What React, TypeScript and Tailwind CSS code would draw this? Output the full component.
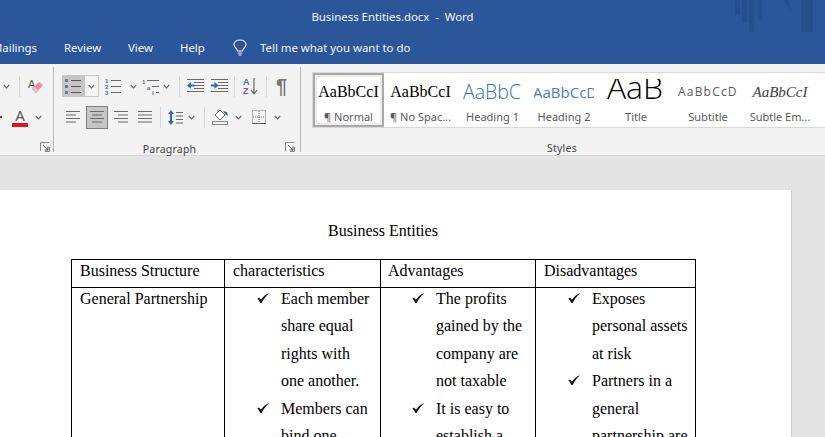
import type { ReactNode } from 'react'

const ui = 'font-["Noto_Sans","Open_Sans",sans-serif]'

function Chevron({ className = '' }: { className?: string }) {
  return (
    <svg width="7" height="5" viewBox="0 0 7 5" className={className}>
      <path d="M0.8 1 L3.5 3.8 L6.2 1" fill="none" stroke="#666" strokeWidth="1.2" />
    </svg>
  )
}

function Divider({ className = '' }: { className?: string }) {
  return <div className={`w-px h-[21px] bg-[#d4d4d4] ${className}`} />
}

function Launcher() {
  return (
    <svg width="10" height="10" viewBox="0 0 10 10">
      <path d="M0.5 9 V0.5 H9" fill="none" stroke="#8a8a8a" />
      <path d="M3 3 L8 8 M8 4.5 V8 H4.5" fill="none" stroke="#555" />
      <path d="M9.5 5 V9.5 H5" fill="none" stroke="#8a8a8a" />
    </svg>
  )
}

function Lines({ widths, x = 0, w = 16, gap = 3, color = '#6a6a6a' }: { widths: number[]; x?: number; w?: number; gap?: number; color?: string }) {
  const h = (widths.length - 1) * gap + 2
  return (
    <svg width={w} height={h} viewBox={`0 0 ${w} ${h}`}>
      {widths.map((lw, i) => (
        <rect key={i} x={x === -1 ? w - lw : x === -2 ? (w - lw) / 2 : x} y={i * gap} width={lw} height="1" fill={color} />
      ))}
    </svg>
  )
}

function BulletsIcon() {
  return (
    <svg width="16" height="15" viewBox="0 0 16 15">
      {[1, 7, 13].map((y) => (
        <g key={y}>
          <rect x="0" y={y - 1} width="3" height="3" fill="#5b7fa8" />
          <rect x="6" y={y} width="10" height="1" fill="#555" />
        </g>
      ))}
    </svg>
  )
}

function NumberingIcon() {
  return (
    <svg width="16" height="17" viewBox="0 0 16 17">
      {['1', '2', '3'].map((n, i) => (
        <g key={n}>
          <text x="0" y={5 + i * 6} fontSize="6" fontWeight="700" fill="#3f6fa5" fontFamily="Liberation Sans">{n}</text>
          <rect x="6" y={2 + i * 6} width="10" height="1" fill="#666" />
        </g>
      ))}
    </svg>
  )
}

function MultilevelIcon() {
  return (
    <svg width="18" height="17" viewBox="0 0 18 17">
      <text x="0" y="6" fontSize="6" fontWeight="700" fill="#3f6fa5" fontFamily="Liberation Sans">1</text>
      <rect x="5" y="2" width="12" height="1" fill="#666" />
      <text x="5" y="12" fontSize="6" fontWeight="700" fill="#3f6fa5" fontFamily="Liberation Sans">a</text>
      <rect x="10" y="8" width="7" height="1" fill="#666" />
      <text x="10" y="17" fontSize="6" fontWeight="700" fill="#3f6fa5" fontFamily="Liberation Sans">i</text>
      <rect x="14" y="14" width="3" height="1" fill="#666" />
    </svg>
  )
}

function IndentIcon({ reverse }: { reverse?: boolean }) {
  return (
    <svg width="17" height="14" viewBox="0 0 17 14">
      {[0, 3, 6, 9, 12].map((y, i) => (
        <rect key={y} x={i === 0 || i === 4 ? 0 : 7} y={y} width={i === 0 || i === 4 ? 17 : 10} height="1" fill="#6a6a6a" />
      ))}
      {reverse ? (
        <path d="M0 6.5 L4 3 V5.5 H7.5 V7.5 H4 V10 Z" fill="#2f6da8" />
      ) : (
        <path d="M7.5 6.5 L3.5 3 V5.5 H0 V7.5 H3.5 V10 Z" fill="#2f6da8" />
      )}
    </svg>
  )
}

function SortIcon() {
  return (
    <svg width="15" height="18" viewBox="0 0 15 18">
      <text x="0" y="8" fontSize="9" fontWeight="700" fill="#3f73ad" fontFamily="Liberation Sans">A</text>
      <text x="0" y="17" fontSize="9" fontWeight="700" fill="#96509a" fontFamily="Liberation Sans">Z</text>
      <path d="M11 1 V16 M8 13 L11 17 L14 13" fill="none" stroke="#666" strokeWidth="1.2" />
    </svg>
  )
}

function LineSpacingIcon() {
  return (
    <svg width="15" height="17" viewBox="0 0 15 17">
      <path d="M3 1 L6 5 H4 V12 H6 L3 16 L0 12 H2 V5 H0 Z" fill="#2f6da8" />
      {[3, 6.5, 10, 13.5].map((y) => (
        <rect key={y} x="8" y={y} width="7" height="1" fill="#666" />
      ))}
    </svg>
  )
}

function ShadingIcon() {
  return (
    <svg width="17" height="16" viewBox="0 0 17 16">
      <path d="M3 6 L8 1 L13 6 L8 11 Z" fill="#fff" stroke="#666" />
      <path d="M6 3 V0.5" stroke="#666" />
      <path d="M11 2 L15 3 L16 7 L13 5 Z" fill="#2f6da8" />
      <rect x="0.5" y="12.5" width="15" height="3" fill="#f3f3f3" stroke="#888" />
    </svg>
  )
}

function BordersIcon() {
  return (
    <svg width="14" height="14" viewBox="0 0 14 14">
      <rect x="0.5" y="0.5" width="13" height="13" fill="none" stroke="#777" strokeDasharray="1 1" />
      <path d="M7 1 V13 M1 7 H13" stroke="#777" strokeDasharray="1 1" />
      <path d="M0 13.5 H14" stroke="#555" />
    </svg>
  )
}

function EraserIcon() {
  return (
    <svg width="16" height="17" viewBox="0 0 16 17">
      <text x="0" y="10" fontSize="11" fill="#555" fontFamily="Liberation Sans">A</text>
      <path d="M4 11 L11 4 L15 7 L8 15 Z" fill="#ee8b92" />
      <path d="M4 11 L6.5 8.5 L10.5 12 L8 15 Z" fill="#f3b6ba" />
    </svg>
  )
}

function FontColorIcon() {
  return (
    <div className="flex flex-col items-center w-[16px]">
      <span className={`text-[15px] leading-[14px] text-[#555] ${ui}`}>A</span>
      <div className="w-[16px] h-[4px] bg-[#e8101c] mt-[1px]" />
    </div>
  )
}

function Bulb() {
  return (
    <svg width="14" height="18" viewBox="0 0 14 18">
      <path d="M4.5 12 C4.5 9.5 1 8.5 1 5.5 C1 2.8 3.6 1 7 1 C10.4 1 13 2.8 13 5.5 C13 8.5 9.5 9.5 9.5 12 Z" fill="none" stroke="#f2f5fa" strokeWidth="1.1" />
      <path d="M5 14 H9 M5.5 16 H8.5" stroke="#f2f5fa" strokeWidth="1.1" />
    </svg>
  )
}

const boxDefault = 'h-[34px] items-center justify-center'

const styleItems = [
  { key: 'normal', label: '¶ Normal', width: 'w-[71px]', box: `${boxDefault} w-[62px]`, cls: 'font-["Liberation_Serif",serif] text-[16px] text-black', sample: 'AaBbCcI', active: true },
  { key: 'nospace', label: '¶ No Spac...', width: 'w-[73px]', box: `${boxDefault} w-[62px]`, cls: 'font-["Liberation_Serif",serif] text-[16px] text-black', sample: 'AaBbCcI' },
  { key: 'h1', label: 'Heading 1', width: 'w-[71px]', box: 'h-[34px] items-center justify-start w-[59px]', cls: 'font-["Open_Sans",sans-serif] font-light text-[19.5px] text-[#2e74b5]', sample: 'AaBbCcD' },
  { key: 'h2', label: 'Heading 2', width: 'w-[72px]', box: 'h-[34px] items-center justify-start w-[60px]', cls: 'font-["Open_Sans",sans-serif] text-[15px] text-[#4a7fb5] -ml-[1px]', sample: 'AaBbCcD' },
  { key: 'title', label: 'Title', width: 'w-[72px]', box: 'h-[22px] mt-[4px] mb-[8px] items-start justify-center w-[62px]', cls: 'font-["Open_Sans",sans-serif] font-light text-[32px] text-black -mt-[8px] -ml-[2px]', sample: 'AaB' },
  { key: 'subtitle', label: 'Subtitle', width: 'w-[72px]', box: 'h-[34px] items-center justify-start w-[60px]', cls: 'font-["Open_Sans",sans-serif] text-[12px] tracking-[1.2px] text-[#5a5a5a]', sample: 'AaBbCcD' },
  { key: 'subtle', label: 'Subtle Em...', width: 'w-[72px]', box: `${boxDefault} w-[62px]`, cls: 'font-["Liberation_Serif",serif] italic text-[15px] text-[#404040]', sample: 'AaBbCcI' },
  { key: 'intense', label: '', width: 'w-[72px]', box: 'h-[34px] items-center justify-start w-[62px] pl-[6px]', cls: 'font-["Liberation_Serif",serif] italic text-[15px] text-[#2e74b5]', sample: 'AaBbCcI' },
]

function Check() {
  return (
    <svg width="12" height="10" viewBox="0 0 12 10" className="mt-[8px] shrink-0">
      <path d="M0.5 5.5 L2 4.4 L4 6.8 C6 4 8 2 11.5 0.3 L11.7 0.8 C9 3 6.5 6 4.6 10 L3.4 10 C2.5 8 1.5 6.5 0.5 5.5 Z" fill="#111" />
    </svg>
  )
}

function CheckList({ items }: { items: string[][] }) {
  return (
    <div className="pl-[24px]">
      {items.map((lines) => (
        <div key={lines[0]} className="flex gap-[12px]">
          <Check />
          <div>
            {lines.map((l) => (
              <div key={l} className="whitespace-nowrap">{l}</div>
            ))}
          </div>
        </div>
      ))}
    </div>
  )
}

function Cell({ className = 'pl-[8px]', children }: { className?: string; children: ReactNode }) {
  return (
    <td className={`border border-black align-top ${className}`}>
      <div className="-mt-[3.5px]">{children}</div>
    </td>
  )
}

export default function App() {
  return (
    <div className={`w-[825px] h-[437px] overflow-hidden flex flex-col bg-[#e4e4e4] ${ui}`}>
      {/* title bar + tabs */}
      <div className="relative h-[64px] shrink-0 bg-[#2b579a] text-[#f4f6fa]">
        <svg width="90" height="34" viewBox="0 0 90 34" className="absolute left-[733px] top-0">
          <g fill="#254f8d">
            <rect x="2" y="0" width="5" height="15" />
            <rect x="9" y="0" width="5" height="23" />
            <rect x="16" y="0" width="5" height="32" />
            <rect x="25" y="0" width="4" height="20" />
            <path d="M50 0 H56 L58 12 Z" />
            <rect x="68" y="0" width="12" height="32" />
          </g>
        </svg>
        <div className="h-[33px] flex items-center justify-center pr-[40px] text-[11.4px] pt-[1px]">
          <span>Business Entities.docx&nbsp; -&nbsp; Word</span>
        </div>
        <div className="h-[31px] flex items-center text-[11.4px] ml-[-8px] pb-[1px]">
          <span className="w-[72px]">Mailings</span>
          <span className="w-[64px]">Review</span>
          <span className="w-[52px]">View</span>
          <span className="w-[53px]">Help</span>
          <Bulb />
          <span className="ml-[13px]">Tell me what you want to do</span>
        </div>
      </div>

      {/* ribbon */}
      <div className="h-[92px] shrink-0 bg-[#f3f3f3] border-b border-[#d6d6d6] flex text-[#444]">
        {/* font group, cut by the window */}
        <div className="w-[54px] shrink-0 border-r border-[#b9b9b9] mt-[3px] mb-[3px] flex flex-col">
          <div className="h-[35px] flex items-center pt-[3px]">
            <Chevron className="ml-[3px]" />
            <Divider className="ml-[9px]" />
            <div className="ml-[8px]"><EraserIcon /></div>
          </div>
          <div className="h-[30px] flex items-center">
            <div className="w-[2px] h-[2px] bg-[#e8101c]" />
            <div className="ml-[10px]"><FontColorIcon /></div>
            <Chevron className="ml-[7px]" />
          </div>
          <div className="flex-1 flex justify-end items-end pr-[3px]"><Launcher /></div>
        </div>

        {/* paragraph group */}
        <div className="w-[247px] shrink-0 border-r border-[#b9b9b9] mt-[3px] mb-[3px] flex flex-col">
          <div className="h-[35px] flex items-center pt-[3px]">
            <div className="ml-[8px] w-[22px] h-[22px] bg-[#c6c6c6] flex items-center justify-center"><BulletsIcon /></div>
            <div className="w-[15px] h-[22px] bg-[#f5f5f5] border border-[#c6c6c6] flex items-center justify-center"><Chevron /></div>
            <div className="ml-[6px]"><NumberingIcon /></div>
            <Chevron className="ml-[9px]" />
            <div className="ml-[5px]"><MultilevelIcon /></div>
            <Chevron className="ml-[3px]" />
            <Divider className="ml-[9px]" />
            <div className="ml-[7px]"><IndentIcon reverse /></div>
            <div className="ml-[7px]"><IndentIcon /></div>
            <Divider className="ml-[6px]" />
            <div className="ml-[8px]"><SortIcon /></div>
            <Divider className="ml-[8px]" />
            <span className="ml-[9px] text-[20px] leading-none font-bold text-[#777] font-['Liberation_Sans',sans-serif]">¶</span>
          </div>
          <div className="h-[30px] flex items-center">
            <div className="ml-[12px] flex"><Lines widths={[14, 10, 14, 10]} w={14} gap={3.5} /></div>
            <div className="ml-[6px] w-[22px] h-[23px] bg-[#c6c6c6] border border-[#7f7f7f] flex items-center justify-center"><Lines widths={[14, 10, 14, 10]} x={-2} w={14} gap={3.5} /></div>
            <div className="ml-[6px] flex"><Lines widths={[14, 10, 14, 10]} x={-1} w={14} gap={3.5} /></div>
            <div className="ml-[10px] flex"><Lines widths={[14, 14, 14, 14]} w={14} gap={3.5} /></div>
            <Divider className="ml-[8px]" />
            <div className="ml-[7px]"><LineSpacingIcon /></div>
            <Chevron className="ml-[5px]" />
            <Divider className="ml-[9px]" />
            <div className="ml-[7px]"><ShadingIcon /></div>
            <Chevron className="ml-[6px]" />
            <div className="ml-[10px]"><BordersIcon /></div>
            <Chevron className="ml-[8px]" />
          </div>
          <div className="flex-1 flex items-end">
            <span className="w-[231px] text-center text-[10.5px] leading-[10px] -mb-[2px] text-[#444] tracking-[0.2px]">Paragraph</span>
            <Launcher />
          </div>
        </div>

        {/* styles group */}
        <div className="flex-1 min-w-0 flex flex-col overflow-hidden">
          <div className="h-[56px] mt-[8px] ml-[11px] flex bg-white border-y border-l border-[#d9d9d9] overflow-hidden">
            {styleItems.map((s) => (
              <div
                key={s.key}
                className={`${s.width} shrink-0 h-full flex flex-col items-center overflow-hidden ${s.active ? 'border-[2px] border-[#a8a8a8] outline outline-[2px] outline-offset-[-4px] outline-[#ededed]' : 'py-[2px]'}`}
              >
                <div className={`${s.box} shrink-0 flex overflow-hidden`}>
                  <span className={`${s.cls} whitespace-nowrap leading-none`}>{s.sample}</span>
                </div>
                <div className="text-[11px] leading-[16px] text-[#5a5a5a] whitespace-nowrap">{s.label}</div>
              </div>
            ))}
          </div>
          <div className="flex-1 flex items-end justify-center pr-[2px]">
            <span className="text-[10.5px] leading-[10px] mb-[2px] tracking-[0.2px]">Styles</span>
          </div>
        </div>
      </div>

      {/* document area */}
      <div className="flex-1 min-h-0 pt-[34px] pr-[33px] overflow-hidden">
        <div className="h-[300px] bg-white border-r border-[#d0d0d0] pl-[71px] pt-[27px] font-['Liberation_Serif',serif] text-[16px] text-black leading-[27.5px]">
          <div className="w-[624px] text-center h-[42px]">Business Entities</div>
          <table className="border-collapse table-fixed w-[624px]">
            <colgroup>
              <col className="w-[153px]" />
              <col className="w-[156px]" />
              <col className="w-[155px]" />
              <col className="w-[160px]" />
            </colgroup>
            <tbody>
              <tr className="h-[28px]">
                <Cell>Business Structure</Cell>
                <Cell>characteristics</Cell>
                <Cell className="pl-[7px]">Advantages</Cell>
                <Cell>Disadvantages</Cell>
              </tr>
              <tr>
                <Cell>General Partnership</Cell>
                <Cell>
                  <CheckList
                    items={[
                      ['Each member', 'share equal', 'rights with', 'one another.'],
                      ['Members can', 'bind one'],
                    ]}
                  />
                </Cell>
                <Cell className="pl-[7px]">
                  <CheckList
                    items={[
                      ['The profits', 'gained by the', 'company are', 'not taxable'],
                      ['It is easy to', 'establish a'],
                    ]}
                  />
                </Cell>
                <Cell>
                  <CheckList
                    items={[
                      ['Exposes', 'personal assets', 'at risk'],
                      ['Partners in a', 'general', 'partnership are'],
                    ]}
                  />
                </Cell>
              </tr>
            </tbody>
          </table>
        </div>
      </div>
    </div>
  )
}
